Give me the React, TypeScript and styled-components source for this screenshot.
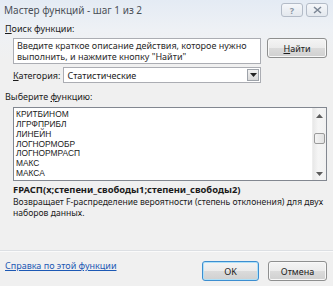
import { createGlobalStyle } from "styled-components"
import styled from "styled-components"

const functions = ["КРИТБИНОМ", "ЛГРФПРИБЛ", "ЛИНЕЙН", "ЛОГНОРМОБР", "ЛОГНОРМРАСП", "МАКС", "МАКСА"]

const GlobalStyle = createGlobalStyle`
  html, body {
    margin: 0;
    padding: 0;
    background: #e9eef5;
  }
  body {
    font-family: "Noto Sans", "Open Sans", sans-serif;
    color: #1b1b1b;
  }
`

export default function App() {
  return (
    <>
      <GlobalStyle />
      <Window>
        <TitleBar>
          <Title>Мастер функций - шаг 1 из 2</Title>
          <TitleButtons>
            <CaptionButton>?</CaptionButton>
            <CaptionButton>
              <svg width="9" height="8" viewBox="0 0 9 8">
                <path d="M1 1 L8 7 M8 1 L1 7" stroke="#7c8796" strokeWidth="1.6" fill="none" />
              </svg>
            </CaptionButton>
          </TitleButtons>
        </TitleBar>
        <Body>
          <Label><u>П</u>оиск функции:</Label>
          <SearchRow>
            <SearchBox>
              Введите краткое описание действия, которое нужно выполнить, и нажмите кнопку "Найти"
            </SearchBox>
            <Button $width={60}><u>Н</u>айти</Button>
          </SearchRow>
          <CategoryRow>
            <span><u>К</u>атегория:</span>
            <Select>
              <span>Статистические</span>
              <SelectArrow>
                <svg width="7" height="4" viewBox="0 0 7 4">
                  <path d="M0 0 H7 L3.5 4 Z" fill="#222" />
                </svg>
              </SelectArrow>
            </Select>
          </CategoryRow>
          <Label $top={8}>Выберите <u>ф</u>ункцию:</Label>
          <ListBox>
            <Items>
              {functions.map(f => <Item key={f}>{f}</Item>)}
            </Items>
            <ScrollBar>
              <svg width="7" height="4" viewBox="0 0 7 4">
                <path d="M0 4 H7 L3.5 0 Z" fill="#5d5d5d" />
              </svg>
              <Thumb />
              <Spacer />
              <svg width="7" height="4" viewBox="0 0 7 4">
                <path d="M0 0 H7 L3.5 4 Z" fill="#5d5d5d" />
              </svg>
            </ScrollBar>
          </ListBox>
          <Signature>FРАСП(x;степени_свободы1;степени_свободы2)</Signature>
          <Description>
            Возвращает F-распределение вероятности (степень отклонения) для двух наборов данных.
          </Description>
          <Spacer />
          <Separator />
          <Footer>
            <HelpLink href="#">Справка по этой функции</HelpLink>
            <FooterButtons>
              <Button $width={57} $default>OK</Button>
              <Button $width={59}>Отмена</Button>
            </FooterButtons>
          </Footer>
        </Body>
      </Window>
    </>
  )
}

const Window = styled.div`
  width: 333px;
  height: 286px;
  display: flex;
  flex-direction: column;
  overflow: hidden;
  background: linear-gradient(#e4ebf4, #eef1f5 30px, #f0f0f0 60px);
`

const TitleBar = styled.div`
  height: 20px;
  flex-shrink: 0;
  display: flex;
  align-items: center;
  justify-content: space-between;
  padding: 0 5px 0 4px;
`

const Title = styled.span`
  font-size: 10px;
  color: #4a4f57;
`

const TitleButtons = styled.div`
  display: flex;
  gap: 3px;
  align-self: flex-start;
  margin-top: 3px;
`

const CaptionButton = styled.div`
  width: 22px;
  height: 14px;
  box-sizing: border-box;
  border: 1px solid #b3bbc7;
  border-radius: 3px;
  background: linear-gradient(#f5f7fa, #e3e8ee);
  display: flex;
  align-items: center;
  justify-content: center;
  font-size: 9px;
  font-weight: bold;
  color: #8a94a2;
`

const Body = styled.div`
  flex: 1;
  display: flex;
  flex-direction: column;
  padding: 3px 6px 5px 5px;
  font-size: 9px;
`

const Label = styled.div<{ $top?: number }>`
  line-height: 12px;
  margin-top: ${p => p.$top ?? 0}px;
`

const SearchRow = styled.div`
  display: flex;
  align-items: flex-start;
  gap: 6px;
  margin: 3px 0 0 8px;
`

const SearchBox = styled.div`
  width: 248px;
  height: 26px;
  box-sizing: border-box;
  border: 1px solid #abadb3;
  background: #fff;
  padding: 1px 3px;
  line-height: 11px;
  color: #2a2a2a;
`

const Button = styled.div<{ $width: number; $default?: boolean }>`
  width: ${p => p.$width}px;
  height: 20px;
  box-sizing: border-box;
  border: 1px solid ${p => (p.$default ? "#3c8ed0" : "#8e8f8f")};
  border-radius: 3px;
  background: linear-gradient(#f4f4f4, #ebebeb 50%, #dbdbdb 51%, #d0d0d0);
  box-shadow: inset 0 0 0 1px ${p => (p.$default ? "#aee0f8" : "#f8f8f8")};
  display: flex;
  align-items: center;
  justify-content: center;
  font-size: 9px;
  color: #1b1b1b;
`

const CategoryRow = styled.div`
  display: flex;
  align-items: center;
  gap: 3px;
  margin: 3px 0 0 8px;
`

const Select = styled.div`
  width: 198px;
  height: 16px;
  box-sizing: border-box;
  border: 1px solid #abadb3;
  background: #fff;
  display: flex;
  align-items: center;
  justify-content: space-between;
  padding: 0 1px 0 3px;
`

const SelectArrow = styled.div`
  width: 12px;
  height: 12px;
  box-sizing: border-box;
  border: 1px solid #9ea3aa;
  background: linear-gradient(#f2f2f2, #d9d9d9);
  display: flex;
  align-items: center;
  justify-content: center;
`

const ListBox = styled.div`
  height: 74px;
  box-sizing: border-box;
  margin: 4px 0 0 8px;
  border: 1px solid #828790;
  background: #fff;
  display: flex;
`

const Items = styled.div`
  flex: 1;
  padding: 2px 2px 0;
`

const Item = styled.div`
  line-height: 9.85px;
  font-family: "Liberation Sans", Arial, sans-serif;
  font-size: 8.4px;
`

const ScrollBar = styled.div`
  width: 13px;
  background: linear-gradient(90deg, #e8e8e8, #f5f5f5 40%, #f1f1f1);
  border-left: 1px solid #eeeeee;
  display: flex;
  flex-direction: column;
  align-items: center;
  padding: 6px 0 4px;
`

const Thumb = styled.div`
  width: 11px;
  height: 11px;
  box-sizing: border-box;
  margin-top: 15px;
  border: 1px solid #9a9a9a;
  border-radius: 2px;
  background: linear-gradient(90deg, #f3f3f3, #e2e2e2);
`

const Spacer = styled.div`
  flex: 1;
`

const Signature = styled.div`
  margin: 3px 0 0 8px;
  line-height: 12px;
  font-weight: bold;
  font-size: 9.4px;
`

const Description = styled.div`
  margin: 1px -4px 0 8px;
  line-height: 11px;
  font-size: 8.6px;
`

const Separator = styled.div`
  height: 1px;
  margin: 0 -6px 0 -5px;
  background: #dcdfe3;
  border-bottom: 1px solid #fafafa;
`

const Footer = styled.div`
  display: flex;
  justify-content: space-between;
  align-items: flex-start;
  margin-top: 9px;
`

const HelpLink = styled.a`
  line-height: 12px;
  margin-top: -1px;
  color: #1c58b4;
  text-decoration: underline;
`

const FooterButtons = styled.div`
  display: flex;
  gap: 9px;
`
